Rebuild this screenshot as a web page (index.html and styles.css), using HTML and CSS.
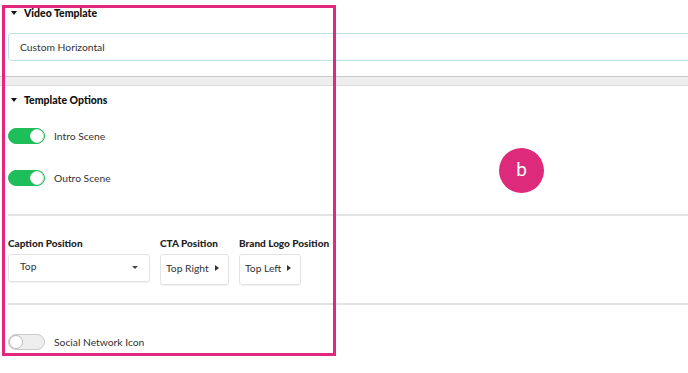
FILE: index.html
```html
<!DOCTYPE html>
<html lang="en">
<head>
  <meta charset="UTF-8">
  <meta name="viewport" content="width=device-width, initial-scale=1.0">
  <title>Template Settings</title>
  <link rel="stylesheet" href="styles.css">
</head>
<body>
<div id="settings">
  <div class="pane">
    <div class="group-title"><span class="tri-down"></span>Video Template</div>
    <div class="text-input">Custom Horizontal</div>
  </div>

  <div class="bar"></div>

  <div class="pane">
    <div class="group-title"><span class="tri-down"></span>Template Options</div>
    <div class="toggle-row first">
      <span class="toggle on"><span class="knob"></span></span>
      <span class="toggle-label">Intro Scene</span>
    </div>
    <div class="toggle-row second">
      <span class="toggle on"><span class="knob"></span></span>
      <span class="toggle-label">Outro Scene</span>
    </div>

    <div class="rule"></div>

    <div class="positions">
      <div class="field">
        <div class="field-label">Caption Position</div>
        <div class="select wide">Top<span class="caret"></span></div>
      </div>
      <div class="field">
        <div class="field-label">CTA Position</div>
        <div class="select cta">Top Right<span class="arrow"></span></div>
      </div>
      <div class="field">
        <div class="field-label">Brand Logo Position</div>
        <div class="select brand">Top Left<span class="arrow"></span></div>
      </div>
    </div>

    <div class="rule second-rule"></div>

    <div class="toggle-row third">
      <span class="toggle"><span class="knob"></span></span>
      <span class="toggle-label">Social Network Icon</span>
    </div>
  </div>
</div>

<div id="highlight"></div>
<div id="marker">b</div>
</body>
</html>
```

FILE: styles.css
```css
body {
  margin: 0;
  font-family: Lato, "Open Sans", sans-serif;
  color: #222;
  background-color: white;
  overflow: hidden;
  height: 373px;
  position: relative;
}
#settings {
  width: 720px;
}
.pane {
  padding-left: 8px;
}
.group-title {
  display: flex;
  align-items: center;
  height: 14px;
  padding-top: 6px;
  font-size: 10.5px;
  font-weight: 900;
  color: #111;
}
.pane + .bar + .pane .group-title {
  padding-top: 7px;
}
.tri-down {
  width: 0;
  height: 0;
  margin-left: 3px;
  margin-right: 7px;
  border-left: 3px solid transparent;
  border-right: 3px solid transparent;
  border-top: 4px solid #111;
}
.text-input {
  margin-top: 13px;
  height: 26px;
  line-height: 26px;
  padding-left: 11px;
  border: 1px solid #bfe1eb;
  border-radius: 3px;
  font-size: 10.3px;
  color: #333;
}
.bar {
  margin-top: 15px;
  height: 8px;
  background-color: #eee;
  border-top: 1px solid #c8c8c8;
  border-bottom: 1px solid #dcdcdc;
}
.toggle-row {
  display: flex;
  align-items: center;
  height: 16px;
}
.toggle-row.first {
  margin-top: 21px;
}
.toggle-row.second {
  margin-top: 26px;
}
.toggle-row.third {
  margin-top: 29px;
}
.toggle {
  display: flex;
  align-items: center;
  box-sizing: border-box;
  width: 37px;
  height: 16px;
  padding: 0 1px;
  border-radius: 8px;
  background-color: #eee;
  border: 1px solid #c9c9c9;
}
.toggle.on {
  justify-content: flex-end;
  background-color: #1ebe5a;
  border-color: #1ebe5a;
}
.knob {
  box-sizing: border-box;
  width: 14px;
  height: 14px;
  margin-left: -1px;
  border-radius: 50%;
  background-color: white;
  border: 1px solid #bbb;
}
.toggle.on .knob {
  margin-left: 0;
  margin-right: -1px;
  border-color: #e2e2e2;
}
.toggle-label {
  margin-left: 9px;
  font-size: 10.3px;
  color: #333;
}
.rule {
  margin-top: 28px;
  height: 2px;
  background-color: #e3e3e3;
}
.rule.second-rule {
  margin-top: 18px;
}
.positions {
  display: flex;
  gap: 10px;
  margin-top: 21px;
}
.field-label {
  height: 12px;
  line-height: 12px;
  font-size: 10px;
  font-weight: 900;
  color: #222;
  white-space: nowrap;
}
.select {
  display: flex;
  align-items: center;
  box-sizing: border-box;
  margin-top: 5px;
  height: 31px;
  padding: 0 6px 3px 5px;
  border: 1px solid #e3e3e3;
  border-radius: 3px;
  box-shadow: 0 1px 1px rgba(0,0,0,0.06);
  font-size: 10.3px;
  color: #333;
}
.select.wide {
  width: 142px;
  height: 28px;
  padding: 0 11px 4px 11px;
  justify-content: space-between;
}
.select.cta {
  width: 69px;
}
.select.brand {
  width: 62px;
}
.caret {
  width: 0;
  height: 0;
  border-left: 3px solid transparent;
  border-right: 3px solid transparent;
  border-top: 3px solid #444;
  margin-top: 3px;
}
.arrow {
  width: 0;
  height: 0;
  margin-left: 6px;
  border-top: 3px solid transparent;
  border-bottom: 3px solid transparent;
  border-left: 4px solid #333;
}
#highlight {
  position: absolute;
  left: 2px;
  top: 5px;
  width: 328px;
  height: 345px;
  border: 3px solid #e1277e;
}
#marker {
  position: absolute;
  left: 499px;
  top: 148px;
  width: 45px;
  height: 45px;
  border-radius: 50%;
  background-color: #dd2a7b;
  color: white;
  font-family: Roboto, sans-serif;
  font-size: 19px;
  line-height: 44px;
  text-align: center;
}
```
